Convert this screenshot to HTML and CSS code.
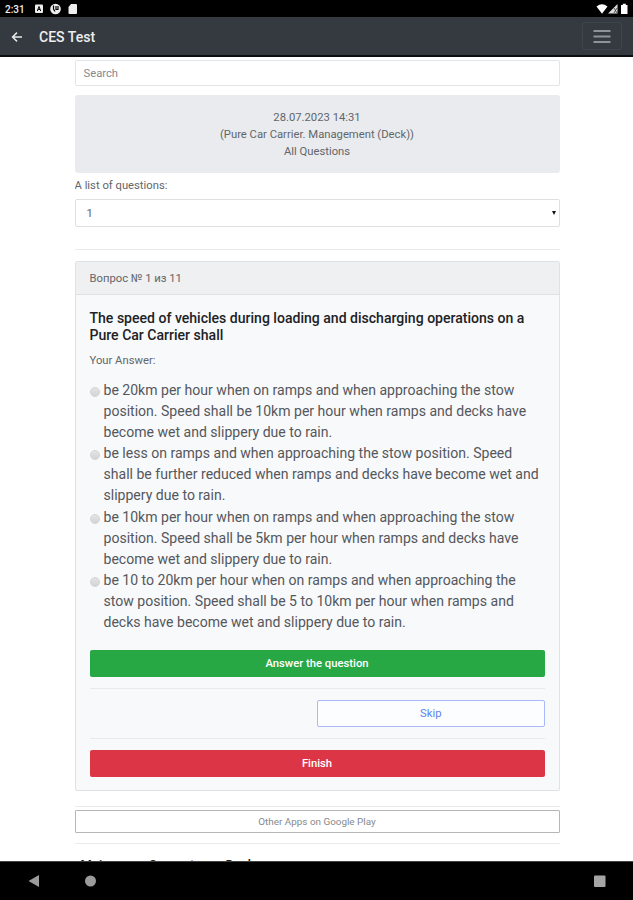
FILE: index.html
```
<!DOCTYPE html>
<html lang="en">
<head>
    <meta charset="UTF-8">
    <meta name="viewport" content="width=device-width, initial-scale=1.0">
    <title>CES Test</title>
    <link rel="stylesheet" href="styles.css">
</head>
<body>
    <!-- Status bar -->
    <div class="status-bar">
        <span class="clock">2:31</span>
        <svg class="status-left" width="46" height="12" viewBox="0 0 46 12">
            <rect x="2" y="1.5" width="8" height="8.5" rx="1" fill="#eee"/>
            <path d="M4.3 8 L6 3.5 L7.7 8 M5 6.4 H7" stroke="#000" fill="none"/>
            <circle cx="22.5" cy="6" r="5.3" fill="#eee"/>
            <path d="M20.5 2.5 V6 L22 8.5 M23 3 V6.5 H25 V3" stroke="#000" stroke-width="1.2" fill="none"/>
            <path d="M38 1 H43 Q44 1 44 2 V10 Q44 11 43 11 H36.5 Q35.5 11 35.5 10 V4 Z" fill="#eee"/>
        </svg>
        <svg class="status-right" width="34" height="12" viewBox="0 0 34 12">
            <path d="M0.5 3.5 Q6 -1 11.5 3.5 L6 10.8 Z" fill="#fff"/>
            <path d="M12 10.5 L21.5 1 V10.5 Z" fill="#ddd"/>
            <path d="M18 5 L21 10 M21 5 L18 10" stroke="#333" stroke-width="0.8"/>
            <path d="M25 2 H26.8 V0.8 H29.8 V2 H31.5 V11 H25 Z" fill="#fff"/>
        </svg>
    </div>

    <div class="navbar">
        <svg class="back" width="12" height="12" viewBox="0 0 12 12">
            <path d="M11 7 H2 M6 2.6 L1.6 7 L6 11.4" stroke="#e8e8e8" stroke-width="1.5" fill="none"/>
        </svg>
        <span class="brand">CES Test</span>
        <button class="toggler">
            <svg width="18" height="16" viewBox="0 0 18 16">
                <path d="M0.5 3 H17.5 M0.5 8.5 H17.5 M0.5 14 H17.5" stroke="#8f9397" stroke-width="2"/>
            </svg>
        </button>
    </div>

    <div class="page">
        <input class="search" type="text" placeholder="Search">

        <div class="info">
            28.07.2023 14:31<br>
            (Pure Car Carrier. Management (Deck))<br>
            All Questions
        </div>

        <div class="label">A list of questions:</div>
        <div class="select"><span>1</span><i class="arrow"></i></div>

        <hr class="hr-list">

        <div class="card">
            <div class="card-header">Вопрос № 1 из 11</div>
            <div class="card-body">
                <h5>The speed of vehicles during loading and discharging operations on a Pure Car Carrier shall</h5>
                <div class="your-answer">Your Answer:</div>

                <div class="answer"><i class="radio"></i><span>be 20km per hour when on ramps and when approaching the stow position. Speed shall be 10km per hour when ramps and decks have become wet and slippery due to rain.</span></div>
                <div class="answer"><i class="radio"></i><span>be less on ramps and when approaching the stow position. Speed shall be further reduced when ramps and decks have become wet and slippery due to rain.</span></div>
                <div class="answer"><i class="radio"></i><span>be 10km per hour when on ramps and when approaching the stow position. Speed shall be 5km per hour when ramps and decks have become wet and slippery due to rain.</span></div>
                <div class="answer"><i class="radio"></i><span>be 10 to 20km per hour when on ramps and when approaching the stow position. Speed shall be 5 to 10km per hour when ramps and decks have become wet and slippery due to rain.</span></div>

                <button class="btn btn-success">Answer the question</button>
                <hr>
                <button class="btn btn-skip">Skip</button>
                <hr>
                <button class="btn btn-danger">Finish</button>
            </div>
        </div>

        <hr class="hr-apps">
        <button class="btn-apps">Other Apps on Google Play</button>
        <hr class="hr-bottom">
        <div class="next-title">Main menu Competence Deck</div>
    </div>

    <!-- Android navigation -->
    <div class="bottom-bar">
        <svg width="633" height="38" viewBox="0 0 633 38">
            <path d="M28.5 19 L39 13 V25 Z" fill="#9b9b9b"/>
            <circle cx="90.5" cy="19" r="5.5" fill="#9b9b9b"/>
            <rect x="594" y="13.5" width="11.5" height="11.5" rx="1" fill="#a5a5a5"/>
        </svg>
    </div>
</body>
</html>
```
FILE: styles.css
```
* {
    box-sizing: border-box;
}
body {
    margin: 0;
    height: 900px;
    display: flex;
    flex-direction: column;
    overflow: hidden;
    background: #fff;
    color: #62666a;
    font-family: Roboto, "Noto Sans", sans-serif;
    font-size: 11.25px;
    line-height: 17px;
}
button, input {
    font-family: inherit;
    font-size: inherit;
}
hr {
    border: 0;
    border-top: 1px solid #e8eaec;
    margin: 11px 0;
}
.status-bar {
    height: 17px;
    flex-shrink: 0;
    display: flex;
    align-items: center;
    background: #000;
    padding: 1px 3px 0 5px;
}
.clock {
    color: #eee;
    font-size: 10px;
    font-weight: 500;
    width: 28px;
}
.status-right {
    margin-left: auto;
}
.navbar {
    height: 40px;
    flex-shrink: 0;
    display: flex;
    align-items: center;
    background: #343a40;
    border-bottom: 2px solid #0c0e10;
    padding: 0 11px;
}
.brand {
    color: #eee;
    font-size: 14.06px;
    font-weight: 500;
    margin: 2px 0 0 16px;
}
.toggler {
    margin-left: auto;
    width: 40px;
    height: 28px;
    padding: 0;
    display: flex;
    align-items: center;
    justify-content: center;
    background: none;
    border: 1px solid #40464b;
    border-radius: 3px;
}
.page {
    flex: 1;
    min-height: 0;
    overflow: hidden;
    width: 485px;
    margin-left: 74.5px;
    padding-top: 3px;
    display: flex;
    flex-direction: column;
}
.page > * {
    flex-shrink: 0;
}
.search {
    height: 26px;
    border: 1px solid #e2e5e8;
    border-radius: 2px;
    padding: 0 8px;
}
.search::placeholder {
    color: #858a8f;
}
.info {
    margin-top: 9px;
    height: 78px;
    padding-top: 14px;
    background: #e9ebee;
    border-radius: 3px;
    text-align: center;
}
.label {
    margin-top: 4px;
}
.select {
    margin-top: 5px;
    height: 28px;
    display: flex;
    align-items: center;
    justify-content: space-between;
    border: 1px solid #dde0e3;
    border-radius: 2px;
    padding: 0 3px 0 11px;
}
.arrow {
    border: 2px solid transparent;
    border-top: 4px solid #111;
    border-bottom: 0;
}
.hr-list {
    margin: 22px 0 11px;
}
.card {
    height: 530px;
    background: #f8f9fb;
    border: 1px solid #dfe1e3;
    border-radius: 2px;
}
.card-header {
    height: 33px;
    padding: 8px 14px;
    background: #eef0f1;
    border-bottom: 1px solid #dfe1e3;
}
.card-body {
    padding: 15px 14px 14px;
}
h5 {
    margin: 0 0 8px;
    color: #202225;
    font-size: 14.06px;
    font-weight: 500;
    line-height: 17px;
}
.your-answer {
    margin-bottom: 11px;
}
.answer {
    display: flex;
    color: #54575b;
    font-size: 14.06px;
    line-height: 21.1px;
}
.radio {
    flex-shrink: 0;
    width: 10px;
    height: 10px;
    margin: 7px 4px 0 0;
    border: 1px solid #d4d4d4;
    border-radius: 50%;
    background: linear-gradient(#e4e4e4, #d4d4d4);
}
.btn {
    display: block;
    width: 100%;
    height: 27px;
    padding: 0;
    border: 0;
    border-radius: 2px;
    color: #fff;
    font-weight: 500;
}
.btn-success {
    margin-top: 17px;
    background: #28a745;
}
.btn-skip {
    width: 50%;
    margin-left: auto;
    background: #fcfdff;
    border: 1px solid #a9b9fa;
    color: #5c82f5;
    font-weight: 400;
}
.btn-danger {
    background: #dc3545;
}
.hr-apps {
    margin: 15px 0 3px;
}
.btn-apps {
    height: 23px;
    padding: 0;
    background: #fff;
    border: 1px solid #b4b7ba;
    border-radius: 1px;
    color: #85898d;
    font-size: 9.9px;
}
.hr-bottom {
    margin: 10px 0 12px;
}
.next-title {
    padding-left: 6px;
    color: #15171a;
    font-size: 13px;
    font-weight: 500;
}
.bottom-bar {
    height: 39px;
    flex-shrink: 0;
    background: #000;
    border-top: 1px solid #444;
}
```
